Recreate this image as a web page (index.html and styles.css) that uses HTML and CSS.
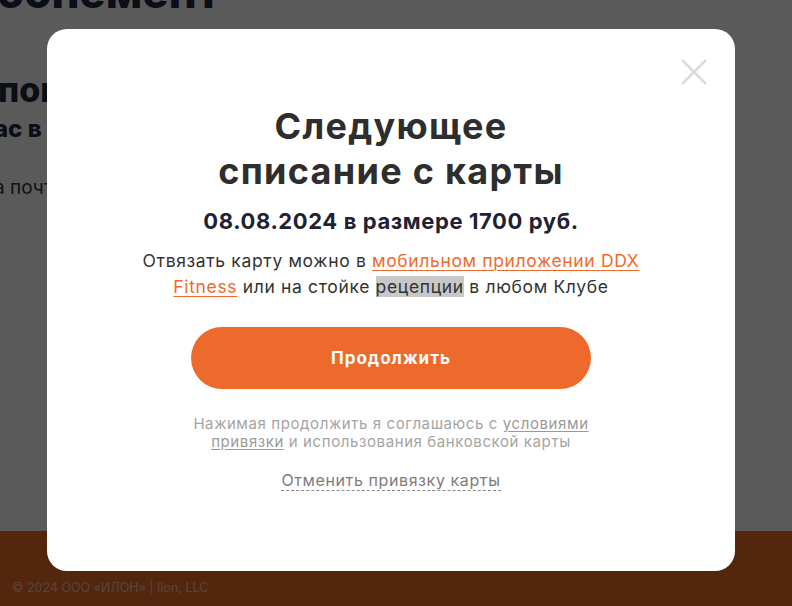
FILE: index.html
```html
<!DOCTYPE html>
<html lang="ru">
<head>
<meta charset="utf-8">
<title>Привязка карты</title>
<link rel="stylesheet" href="styles.css">
</head>
<body>
<div class="page">
  <main class="bg-content">
    <h1 class="bg-title">бонемент</h1>
    <h2 class="bg-sub">понравился</h2>
    <p class="bg-lead">ас в <span class="bg-accent">DDX</span></p>
    <p class="bg-text">а почту</p>
  </main>
  <footer class="site-footer">© 2024 ООО «ИЛОН» | Ilon, LLC</footer>
</div>

<div class="overlay">
  <div class="modal">
    <button class="modal-close" aria-label="Закрыть">
      <svg width="28" height="28" viewBox="0 0 28 28"><path d="M2 2 L26 26 M26 2 L2 26" stroke="#dcdcdc" stroke-width="2.6" fill="none"/></svg>
    </button>
    <h2 class="modal-title">Следующее<br>списание с карты</h2>
    <p class="modal-date">08.08.2024 в размере 1700 руб.</p>
    <p class="modal-text">Отвязать карту можно в <a class="link" href="#">мобильном приложении DDX Fitness</a> или на стойке <span class="selected">рецепции</span> в любом Клубе</p>
    <button class="btn-primary">Продолжить</button>
    <p class="modal-note">Нажимая продолжить я соглашаюсь с <a class="note-link" href="#">условиями привязки</a> и использования банковской карты</p>
    <a class="modal-cancel" href="#">Отменить привязку карты</a>
  </div>
</div>
</body>
</html>
```

FILE: styles.css
```css
html, body {
  margin: 0;
  padding: 0;
  height: 100%;
}

body {
  font-family: "Inter", "DejaVu Sans", sans-serif;
  background: #ffffff;
  overflow: hidden;
}

.page {
  height: 606px;
  display: flex;
  flex-direction: column;
}

.bg-content {
  flex: 1;
  color: #1e2a40;
}

.bg-title {
  margin: -30px 0 0 -3px;
  font-size: 44px;
  line-height: 44px;
  font-weight: 800;
  white-space: nowrap;
}

.bg-sub {
  margin: 56px 0 0 -2px;
  font-size: 34px;
  line-height: 40px;
  font-weight: 800;
  white-space: nowrap;
}

.bg-lead {
  margin: 4px 0 0 -6px;
  font-size: 24px;
  line-height: 30px;
  font-weight: 800;
  white-space: nowrap;
}

.bg-accent {
  color: #ef3a2e;
}

.bg-text {
  margin: 32px 0 0 -6px;
  font-size: 19px;
  line-height: 24px;
  color: #333;
  white-space: nowrap;
}

.site-footer {
  height: 75px;
  background: #eb6c2a;
  color: rgba(255, 255, 255, 0.6);
  font-size: 12.5px;
  padding: 37px 12px 0;
  display: flex;
  align-items: center;
  box-sizing: border-box;
}

.overlay {
  position: fixed;
  inset: 0;
  background: rgba(0, 0, 0, 0.647);
  padding: 29px 0 0 47px;
  box-sizing: border-box;
}

.modal {
  position: relative;
  width: 688px;
  height: 542px;
  background: #fff;
  border-radius: 20px;
  box-sizing: border-box;
  padding: 75px 90px 0;
  display: flex;
  flex-direction: column;
  align-items: center;
  text-align: center;
}

.modal-close {
  position: absolute;
  top: 29px;
  right: 27px;
  width: 28px;
  height: 28px;
  padding: 0;
  border: 0;
  background: none;
  cursor: pointer;
}

.modal-title {
  margin: 0;
  font-size: 36px;
  line-height: 45px;
  font-weight: 700;
  letter-spacing: 1.3px;
  color: #2e2e2e;
}

.modal-date {
  margin: 12px 0 0;
  font-size: 22px;
  line-height: 30px;
  font-weight: 700;
  letter-spacing: 0.6px;
  color: #1f2233;
}

.modal-text {
  margin: 12px 0 0;
  font-size: 17.5px;
  line-height: 26px;
  letter-spacing: 0.65px;
  color: #333;
}

.link {
  color: #ef6a2e;
  text-decoration: underline;
  text-underline-offset: 3px;
  text-decoration-thickness: 1px;
}

.selected {
  background: #c8c8c8;
}

.btn-primary {
  margin-top: 27px;
  width: 400px;
  height: 62px;
  border: 0;
  border-radius: 31px;
  background: #ed6a2c;
  color: #fff;
  font-family: inherit;
  font-size: 17px;
  font-weight: 700;
  letter-spacing: 1px;
  cursor: pointer;
}

.modal-note {
  margin: 26px 0 0;
  max-width: 400px;
  font-size: 15px;
  line-height: 18px;
  letter-spacing: 0.6px;
  color: #a4a4a4;
}

.note-link {
  color: #9a9a9a;
  text-decoration: underline;
  text-underline-offset: 2px;
}

.modal-cancel {
  margin-top: 19px;
  font-size: 16px;
  line-height: 20px;
  letter-spacing: 0.6px;
  color: #7d7d7d;
  text-decoration: none;
  border-bottom: 1px dashed #8a8a8a;
}
```
